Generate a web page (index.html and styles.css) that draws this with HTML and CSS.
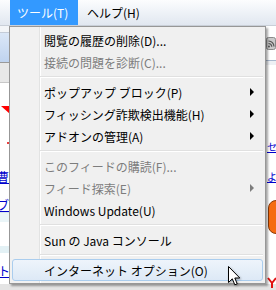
FILE: index.html
```html
<!doctype html>
<html>
<head>
<meta charset="UTF-8">
<title>ツール メニュー</title>
<link rel="stylesheet" href="styles.css">
</head>
<body>
<div class="screen">

  <div class="menubar">
    <span class="baritem active">ツール(T)</span>
    <span class="baritem">ヘルプ(H)</span>
  </div>

  <!-- page behind the menu -->
  <div class="page">
    <div class="tb-top"></div>
    <div class="tb-blue"></div>
    <div class="tb-grey"></div>
    <div class="red-tri"></div>
    <div class="red-dot"></div>
    <span class="link l1">曹</span>
    <span class="link l2">ブ</span>
    <div class="row r1"></div>
    <div class="row r2"></div>
    <span class="link l3">ト:</span>
    <div class="bottom-grey"></div>

    <svg class="rss" width="10" height="13" viewBox="0 0 10 13">
      <rect x="0.5" y="0.5" width="9" height="12" rx="2" fill="#c9c9c9" stroke="#8a8a8a"/>
      <path d="M2.5 4 A6 6 0 0 1 8 9.5" fill="none" stroke="#555" stroke-width="1.2"/>
      <path d="M2.5 6.5 A3.5 3.5 0 0 1 5.8 9.8" fill="none" stroke="#555" stroke-width="1.2"/>
      <circle cx="3" cy="9.5" r="1" fill="#555"/>
    </svg>
    <div class="tb-line"></div>
    <span class="link l4">セ</span>
    <span class="link l5">よ</span>
    <div class="orange"></div>
    <svg class="red-mark" width="10" height="12" viewBox="0 0 10 12">
      <path d="M1 1 L5 6 L9 1 M5 6 L5 11" fill="none" stroke="#e01010" stroke-width="2"/>
    </svg>
  </div>

  <div class="menu">
    <div class="item">閲覧の履歴の削除(D)...</div>
    <div class="item off">接続の問題を診断(C)...</div>
    <div class="sep"></div>
    <div class="item">ポップアップ ブロック(P)<span class="arrow"></span></div>
    <div class="item">フィッシング詐欺検出機能(H)<span class="arrow"></span></div>
    <div class="item">アドオンの管理(A)<span class="arrow"></span></div>
    <div class="sep"></div>
    <div class="item off">このフィードの購読(F)...</div>
    <div class="item off">フィード探索(E)<span class="arrow"></span></div>
    <div class="item">Windows Update(U)</div>
    <div class="sep"></div>
    <div class="item">Sun の Java コンソール</div>
    <div class="sep"></div>
    <div class="item hot">インターネット オプション(O)</div>
  </div>

  <svg class="cursor" width="13" height="21" viewBox="0 0 13 21">
    <path d="M0.5 0.5 L0.5 16.5 L4.3 12.8 L6.8 18.8 L9.2 17.8 L6.8 12 L11.8 12 Z" fill="#fff" stroke="#000" stroke-linejoin="round"/>
  </svg>

</div>
</body>
</html>
```

FILE: styles.css
```css
body { margin: 0; font-family: "Noto Sans CJK JP", "Noto Sans", sans-serif; font-size: 12px; color: #000; }
.screen { position: relative; width: 276px; height: 290px; overflow: hidden; background: #fff; }

/* menu bar */
.menubar { height: 25px; border-bottom: 1px solid #c9cfd8; background: linear-gradient(to bottom, #fcfdfe 0%, #eef2f7 50%, #e1e7f0 100%); display: flex; padding-left: 10px; }
.baritem { display: flex; align-items: center; padding: 0 7px; height: 25px; }
.baritem.active { background: #3399ff; color: #fff; width: 54px; }
.baritem + .baritem { margin-left: 2px; }

/* page behind */
.page { position: absolute; left: 0; top: 26px; width: 276px; height: 264px; }
.tb-top { position: absolute; left: 0; top: 0; width: 10px; height: 6px; background: #f3f5f8; border-bottom: 1px solid #c4ccd8; }
.tb-blue { position: absolute; left: 0; top: 7px; width: 10px; height: 29px; background: linear-gradient(to bottom, #dbe7f7, #bfd3ef); }
.tb-grey { position: absolute; left: 0; top: 36px; width: 10px; height: 19px; background: #e8e8e8; border-top: 1px solid #9a9a9a; border-bottom: 1px solid #c8c8c8; }
.red-tri { position: absolute; left: 1px; top: 80px; width: 9px; height: 8px; background: #ff0000; clip-path: polygon(0 0, 100% 0, 100% 100%); }
.red-dot { position: absolute; left: 7px; top: 116px; width: 2px; height: 2px; background: #e00000; border-radius: 1px; }
.link { position: absolute; color: #0000cc; text-decoration: underline; line-height: 14px; }
.l1 { left: -3px; top: 144px; }
.l2 { left: -3px; top: 172px; }
.l3 { left: -2px; top: 238px; }
.l4 { left: 267px; top: 114px; font-size: 10px; }
.l5 { left: 267px; top: 144px; font-size: 10px; }
.row { position: absolute; left: 0; width: 10px; }
.r1 { top: 186px; height: 9px; background: #eaf5f8; border-top: 1px solid #d6e6ec; }
.r2 { top: 220px; height: 7px; background: #e3f1f5; }
.bottom-grey { position: absolute; left: 0; top: 258px; width: 276px; height: 6px; background: #e4e4e4; }
.rss { position: absolute; left: 266px; top: 11px; }
.tb-line { position: absolute; left: 266px; top: 34px; width: 10px; height: 4px; background: #edf0f4; border-top: 1px solid #a9b8cd; }
.orange { position: absolute; left: 268px; top: 174px; width: 16px; height: 32px; border-radius: 8px; background: #f56c12; border: 1px solid #8a3a08; }
.red-mark { position: absolute; left: 267px; top: 251px; }

/* dropdown */
.menu { position: absolute; left: 9px; top: 26px; width: 257px; box-sizing: border-box; border: 1px solid #979797; padding: 2px; background: linear-gradient(to right, #f1f1f1 0, #f1f1f1 29px, #e2e3e3 29px, #e2e3e3 30px, #fff 30px, #fff 31px, #f0f0f0 31px); box-shadow: 2px 2px 2px rgba(0, 0, 0, 0.35); }
.item { height: 22px; display: flex; align-items: center; padding: 0 9px 0 32px; box-sizing: border-box; white-space: nowrap; }
.item.off { color: #7d7d7d; }
.item.hot { border: 1px solid #aacdee; border-radius: 3px; padding-left: 31px; background: linear-gradient(to bottom, #eef4fb, #dde9f6); }
.arrow { margin-left: auto; width: 0; height: 0; border-left: 4px solid #000; border-top: 4px solid transparent; border-bottom: 4px solid transparent; }
.off .arrow { border-left-color: #7d7d7d; }
.sep { height: 8px; margin-left: 28px; background: linear-gradient(to bottom, transparent 3px, #e0e0e0 3px, #e0e0e0 4px, #fff 4px, #fff 5px, transparent 5px); }

.cursor { position: absolute; left: 228px; top: 266px; filter: drop-shadow(1px 1px 1px rgba(0, 0, 0, 0.3)); }
```
